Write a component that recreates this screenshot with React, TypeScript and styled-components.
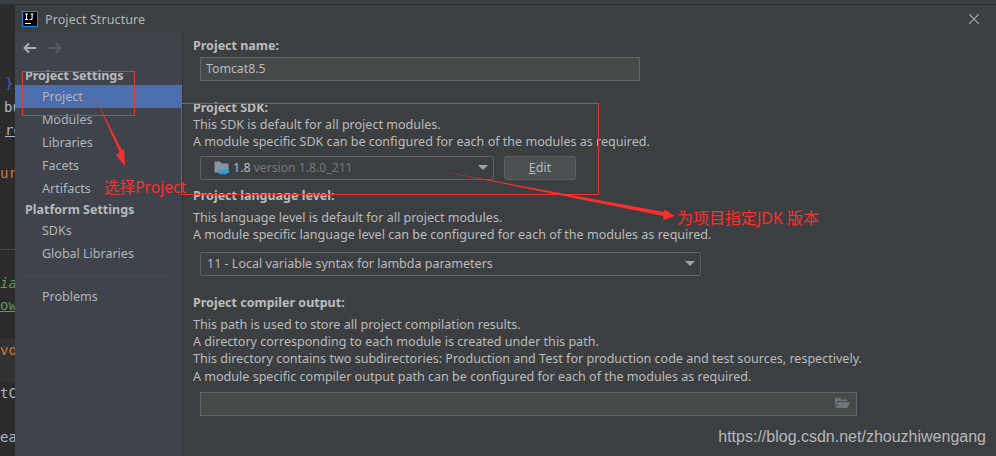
import React from "react";
import styled, { createGlobalStyle } from "styled-components";

const Global = createGlobalStyle`
  html, body { margin: 0; padding: 0; background: #3c3f41; }
  #root { width: 996px; height: 456px; }
`;

const UI = `"Noto Sans", "Noto Sans CJK SC", sans-serif`;

const Screen = styled.div`
  position: relative;
  width: 996px;
  height: 456px;
  overflow: hidden;
  display: flex;
  flex-direction: column;
  background: #3c3f41;
  font-family: ${UI};
  font-size: 13px;
  color: #bbbbbb;
`;
const TopStrip = styled.div`
  height: 4px;
  flex: none;
  background: #3c3f41;
  border-bottom: 1px solid #2d2f30;
`;
const Main = styled.div`
  flex: 1;
  display: flex;
  min-height: 0;
`;
const Editor = styled.div`
  width: 15px;
  flex: none;
  overflow: hidden;
  background: #2b2b2b;
  font-family: "DejaVu Sans Mono", monospace;
  font-size: 14px;
  line-height: 22px;
  white-space: pre;
  padding-top: 67px;
`;
const CodeLine = styled.div<{ $color: string; $h?: number; $under?: boolean; $bg?: string; $it?: boolean; $rule?: boolean; $indent?: number }>`
  height: ${(p) => p.$h ?? 22}px;
  padding-left: ${(p) => p.$indent ?? 0}px;
  color: ${(p) => p.$color};
  text-decoration: ${(p) => (p.$under ? "underline" : "none")};
  font-style: ${(p) => (p.$it ? "italic" : "normal")};
  background: ${(p) => p.$bg ?? "transparent"};
  border-top: ${(p) => (p.$rule ? "1px solid #444444" : "none")};
  box-sizing: border-box;
`;
const Dialog = styled.div`
  flex: 1;
  min-width: 0;
  display: flex;
  flex-direction: column;
`;
const TitleBar = styled.div`
  height: 28px;
  flex: none;
  display: flex;
  align-items: center;
  padding: 0 17px 0 7px;
  gap: 7px;
  font-size: 12.5px;
  letter-spacing: 0.1px;
  color: #b4b8ba;
`;
const TitleText = styled.span`
  flex: 1;
`;
const Columns = styled.div`
  flex: 1;
  display: flex;
  min-height: 0;
`;
const Sidebar = styled.div`
  width: 167px;
  flex: none;
  background: #3e434c;
  border-right: 1px solid #323232;
  display: flex;
  flex-direction: column;
`;
const NavTools = styled.div`
  height: 29px;
  display: flex;
  align-items: center;
  gap: 11px;
  padding-left: 8px;
  margin-bottom: 4px;
`;
const Group = styled.div<{ $h: number }>`
  height: ${(p) => p.$h}px;
  line-height: ${(p) => p.$h}px;
  padding-left: 10px;
  font-weight: 700;
  font-size: 12.5px;
  color: #b6b9bc;
`;
const Item = styled.div<{ $selected?: boolean }>`
  height: 23px;
  line-height: 23px;
  padding-left: 27px;
  font-size: 12.5px;
  color: #b3b6b9;
  background: ${(p) => (p.$selected ? "#4b6eaf" : "transparent")};
`;
const SideRule = styled.div`
  height: 1px;
  margin: 10px 9px 9px 9px;
  background: #4a4d50;
`;
const Content = styled.div`
  flex: 1;
  min-width: 0;
  padding: 4px 0 0 10px;
  display: flex;
  flex-direction: column;
`;
const Label = styled.div<{ $top: number; $bottom?: number }>`
  margin-top: ${(p) => p.$top}px;
  margin-bottom: ${(p) => p.$bottom ?? 0}px;
  height: 18px;
  line-height: 18px;
  font-weight: 700;
  font-size: 12.5px;
  color: #bbbbbb;
`;
const Hint = styled.div`
  height: 17.4px;
  line-height: 17.4px;
  font-size: 12.55px;
  white-space: nowrap;
  color: #bbbbbb;
`;
const FieldRow = styled.div<{ $top: number }>`
  margin-top: ${(p) => p.$top}px;
  padding-left: 7px;
  display: flex;
  gap: 10px;
`;
const TextField = styled.div<{ $w: number }>`
  width: ${(p) => p.$w}px;
  height: 24px;
  box-sizing: border-box;
  border: 1px solid #646464;
  background: #45494a;
  padding: 0 6px 2px 5px;
  display: flex;
  align-items: center;
  justify-content: space-between;
  font-size: 12.3px;
  color: #bbbbbb;
`;
const Combo = styled.div<{ $w: number; $pad: number }>`
  width: ${(p) => p.$w}px;
  height: 24px;
  box-sizing: border-box;
  border: 1px solid #5e6060;
  border-radius: 2px;
  background: #3c3f41;
  padding: 0 5px 0 ${(p) => p.$pad}px;
  display: flex;
  align-items: center;
  gap: 3px;
  font-size: 12.5px;
  color: #bbbbbb;
`;
const Muted = styled.span`
  color: #787878;
  font-size: 12.2px;
`;
const Grow = styled.span`
  flex: 1;
`;
const Caret = styled.span`
  width: 0;
  height: 0;
  border-left: 5px solid transparent;
  border-right: 5px solid transparent;
  border-top: 5px solid #a0a3a5;
`;
const EditButton = styled.div`
  width: 72px;
  height: 24px;
  box-sizing: border-box;
  border: 1px solid #5e6060;
  border-radius: 3px;
  background: #4c5052;
  display: flex;
  align-items: center;
  justify-content: center;
  font-size: 12.5px;
  color: #bbbbbb;
`;
const Mnemonic = styled.span`
  text-decoration: underline;
`;
const Mark = styled.div<{ $l: number; $t: number; $w: number; $h: number }>`
  position: absolute;
  left: ${(p) => p.$l}px;
  top: ${(p) => p.$t}px;
  width: ${(p) => p.$w}px;
  height: ${(p) => p.$h}px;
  box-sizing: border-box;
  border: 1px solid #f0312e;
  pointer-events: none;
`;
const Note = styled.div<{ $l: number; $t: number; $size: number }>`
  position: absolute;
  left: ${(p) => p.$l}px;
  top: ${(p) => p.$t}px;
  font-family: "Noto Sans", "Noto Sans CJK SC", sans-serif;
  font-size: ${(p) => p.$size}px;
  line-height: 20px;
  color: #f9302d;
  white-space: nowrap;
`;
const Overlay = styled.svg`
  position: absolute;
  left: 0;
  top: 0;
  pointer-events: none;
`;
const Watermark = styled.div`
  position: absolute;
  right: 10px;
  top: 427px;
  font-family: "Liberation Sans", sans-serif;
  font-size: 16px;
  line-height: 20px;
  color: #b5b7b8;
`;

const LogoIcon = () => (
  <svg width="16" height="16" viewBox="0 0 16 16">
    <rect x="0.5" y="0.5" width="15" height="15" fill="#000" stroke="#1e88f0" />
    <path d="M3 3h3M4.5 3v5.5M3 8.5h3M7.5 8.5h1.6a1 1 0 0 0 1-1V3M8.5 3h3" fill="none" stroke="#fff" strokeWidth="1.1" />
    <rect x="3" y="12" width="6" height="1" fill="#fff" />
  </svg>
);
const CloseIcon = () => (
  <svg width="10" height="10" viewBox="0 0 10 10">
    <path d="M0 0L10 10M10 0L0 10" stroke="#a9abad" strokeWidth="1.1" />
  </svg>
);
const Arrow = ({ color, flip }: { color: string; flip?: boolean }) => (
  <svg width="14" height="12" viewBox="0 0 14 12" style={flip ? { transform: "scaleX(-1)" } : undefined}>
    <path d="M13 6H2M6 1.5L1.5 6L6 10.5" fill="none" stroke={color} strokeWidth="2" />
  </svg>
);
const SdkFolder = () => (
  <svg width="16" height="16" viewBox="0 0 16 16">
    <path d="M0.5 1.5h5.5l1.5 2H14.5v9h-14z" fill="#87949f" />
    <path d="M5 9.5h8v3.2a1.5 1.5 0 0 1-1.5 1.5h-5A1.5 1.5 0 0 1 5 12.7z" fill="#2f9fe0" />
    <path d="M13 10.5h2v1.6h-2" fill="none" stroke="#2f9fe0" />
  </svg>
);
const OpenFolder = () => (
  <svg width="15" height="12" viewBox="0 0 15 12">
    <path d="M0 1h5l1.5 1.5H12V4H3L0 10z" fill="#6f7678" />
    <path d="M3.5 5H15l-2.5 6H0.8z" fill="#6f7678" />
  </svg>
);

export default function App() {
  return (
    <Screen>
      <Global />
      <TopStrip />
      <Main>
        <Editor>
          <CodeLine $color="#3f58b8" $h={24} $indent={5}>{"}"}</CodeLine>
          <CodeLine $color="#a9b7c6" $h={23} $indent={4}>bu</CodeLine>
          <CodeLine $color="#a9b7c6" $under $h={43} $indent={5}>re</CodeLine>
          <CodeLine $color="#cc7832" $h={87}>urn</CodeLine>
          <CodeLine $color="#629755" $rule $h={23} />
          <CodeLine $color="#6a9a55" $it $h={22}>ia</CodeLine>
          <CodeLine $color="#629755" $under $h={45}>ow:</CodeLine>
          <CodeLine $color="#cc7832" $bg="#323232" $h={43}>voi</CodeLine>
          <CodeLine $color="#a9b7c6" $h={44}>tCT</CodeLine>
          <CodeLine $color="#a9b7c6">ead</CodeLine>
        </Editor>
        <Dialog>
          <TitleBar>
            <LogoIcon />
            <TitleText>Project Structure</TitleText>
            <CloseIcon />
          </TitleBar>
          <Columns>
            <Sidebar>
              <NavTools>
                <Arrow color="#aeb0b2" />
                <Arrow color="#5a5d5f" flip />
              </NavTools>
              <Group $h={19}>Project Settings</Group>
              <Item $selected>Project</Item>
              <Item>Modules</Item>
              <Item>Libraries</Item>
              <Item>Facets</Item>
              <Item>Artifacts</Item>
              <Group $h={19}>Platform Settings</Group>
              <Item>SDKs</Item>
              <Item>Global Libraries</Item>
              <SideRule />
              <Item>Problems</Item>
            </Sidebar>
            <Content>
              <Label $top={0}>Project name:</Label>
              <FieldRow $top={2}>
                <TextField $w={440}>Tomcat8.5</TextField>
              </FieldRow>
              <Label $top={18} $bottom={-1}>Project SDK:</Label>
              <Hint>This SDK is default for all project modules.</Hint>
              <Hint>A module specific SDK can be configured for each of the modules as required.</Hint>
              <FieldRow $top={5}>
                <Combo $w={294} $pad={13}>
                  <SdkFolder />
                  <span>1.8</span>
                  <Muted>version 1.8.0_211</Muted>
                  <Grow />
                  <Caret />
                </Combo>
                <EditButton><span><Mnemonic>E</Mnemonic>dit</span></EditButton>
              </FieldRow>
              <Label $top={7} $bottom={4}>Project language level:</Label>
              <Hint>This language level is default for all project modules.</Hint>
              <Hint>A module specific language level can be configured for each of the modules as required.</Hint>
              <FieldRow $top={8}>
                <Combo $w={501} $pad={6}>
                  <span>11 - Local variable syntax for lambda parameters</span>
                  <Grow />
                  <Caret />
                </Combo>
              </FieldRow>
              <Label $top={18} $bottom={4}>Project compiler output:</Label>
              <Hint>This path is used to store all project compilation results.</Hint>
              <Hint>A directory corresponding to each module is created under this path.</Hint>
              <Hint>This directory contains two subdirectories: Production and Test for production code and test sources, respectively.</Hint>
              <Hint>A module specific compiler output path can be configured for each of the modules as required.</Hint>
              <FieldRow $top={7}>
                <TextField $w={657}>
                  <Grow />
                  <OpenFolder />
                </TextField>
              </FieldRow>
            </Content>
          </Columns>
        </Dialog>
      </Main>
      <Mark $l={22} $t={71} $w={113} $h={45} />
      <Mark $l={181} $t={103} $w={418} $h={92} />
      <Overlay width="996" height="456" viewBox="0 0 996 456">
        <path d="M95 97L119.5 152L116 155L125 166L124 149L122 150.5Z" fill="#f9302d" />
        <path d="M440 171L664 212L664.5 209.5L675 216L663 220.5L663.5 216Z" fill="#f9302d" />
      </Overlay>
      <Note $l={104} $t={177} $size={15.6}>选择Project</Note>
      <Note $l={677} $t={208} $size={16}>为项目指定JDK 版本</Note>
      <Watermark>https://blog.csdn.net/zhouzhiwengang</Watermark>
    </Screen>
  );
}
